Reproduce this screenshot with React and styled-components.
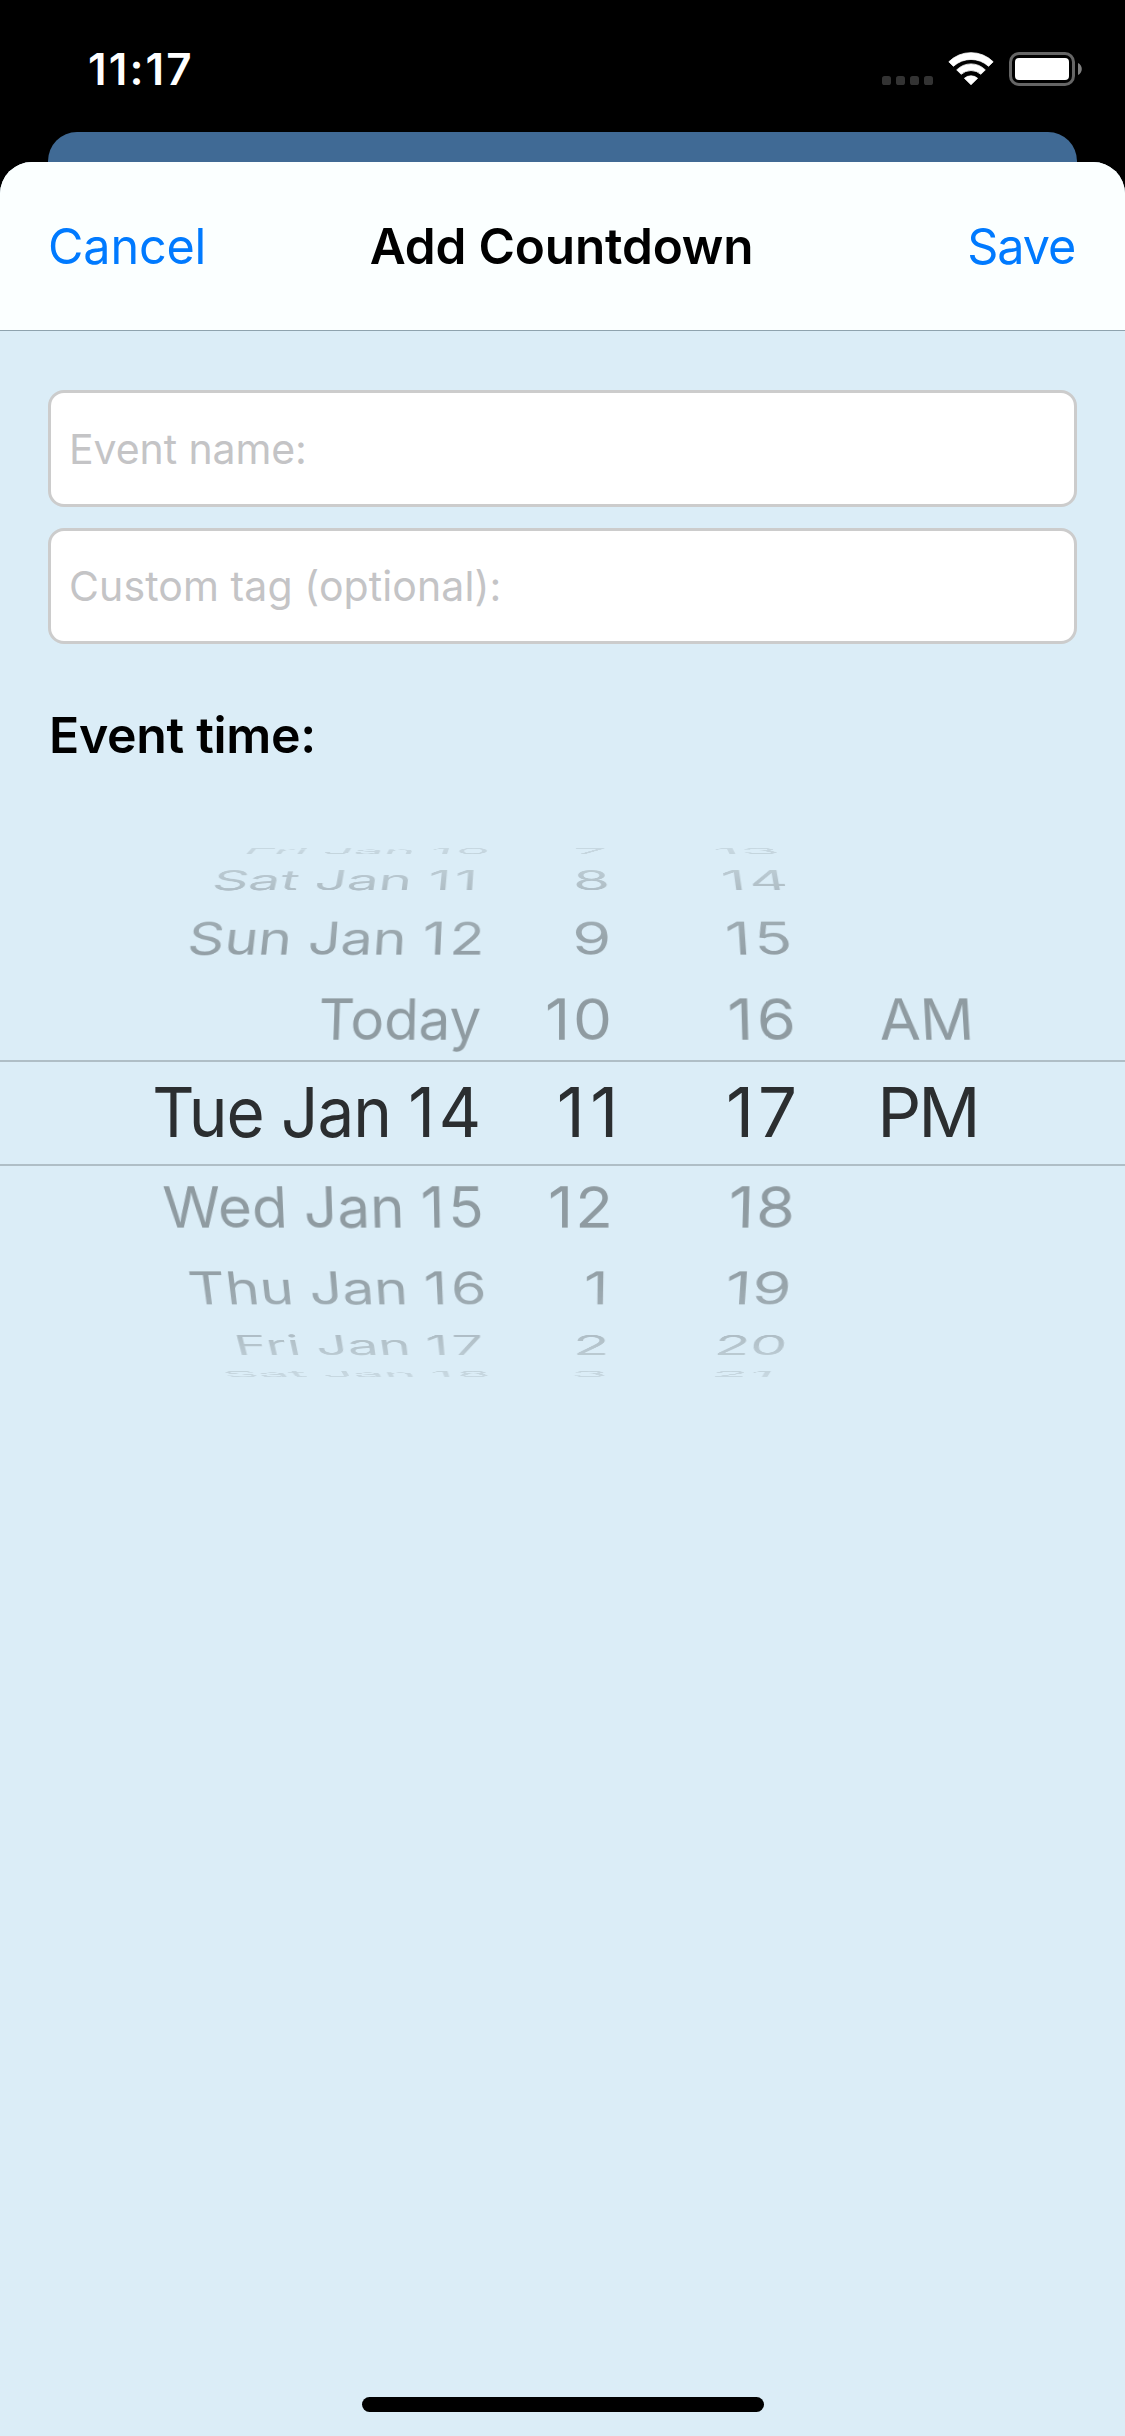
import React from "react";
import styled, { createGlobalStyle } from "styled-components";

const GlobalStyle = createGlobalStyle`
  *, *::before, *::after { box-sizing: border-box; }
  html, body { margin: 0; padding: 0; background: #000; }
  body { font-family: Inter, "Liberation Sans", sans-serif; }
`;

const Screen = styled.div`
  width: 1125px;
  height: 2436px;
  display: flex;
  flex-direction: column;
  background: #000;
  overflow: hidden;
`;

const StatusBar = styled.div`
  flex: none;
  height: 132px;
  padding: 52px 43px 0 88px;
  display: flex;
  justify-content: space-between;
  align-items: flex-start;
`;

const Clock = styled.time`
  color: #fff;
  font-size: 44px;
  font-weight: 600;
  line-height: 34px;
  letter-spacing: 2.1px;
`;

const Indicators = styled.div`
  display: flex;
  height: 34px;

  svg { display: block; }
  svg + svg { margin-left: 15px; }
`;

const CardBehind = styled.div`
  flex: none;
  height: 30px;
  margin: 0 48px;
  border-radius: 29px 29px 0 0;
  background: #406a95;
`;

const Sheet = styled.main`
  flex: 1;
  display: flex;
  flex-direction: column;
  border-radius: 32px 32px 0 0;
  background: #dbedf7;
  overflow: hidden;
`;

const Header = styled.header`
  flex: none;
  height: 169px;
  padding: 0 50px 0 48px;
  display: grid;
  grid-template-columns: 1fr auto 1fr;
  align-items: center;
  background: #fbffff;
  border-bottom: 1px solid #8fa3ae;
`;

const Title = styled.h1`
  margin: 0;
  font-size: 49.5px;
  font-weight: 600;
  line-height: 64px;
  letter-spacing: -0.16px;
  color: #000;
  white-space: nowrap;
`;

const BarButton = styled.button`
  justify-self: ${(p) => p.$side};
  padding: 0;
  border: 0;
  background: none;
  font-family: inherit;
  font-size: 49.5px;
  font-weight: 400;
  line-height: 64px;
  letter-spacing: ${(p) => p.$tracking}px;
  color: #007aff;
  transform: scaleX(0.98);
  transform-origin: ${(p) => (p.$side === "start" ? "left" : "right")};
`;

const Form = styled.section`
  flex: none;
  padding: 59px 48px 0;
  display: flex;
  flex-direction: column;
`;

const Field = styled.div`
  height: ${(p) => p.$height}px;
  padding-left: 18px;
  display: flex;
  align-items: center;
  border: 3px solid #ccc;
  border-radius: 16px;
  background: #fff;

  & + & { margin-top: 21px; }
`;

const Placeholder = styled.span`
  font-size: 41px;
  line-height: 54px;
  letter-spacing: ${(p) => p.$tracking}px;
  color: #c4c4c6;
  white-space: nowrap;
`;

const SectionLabel = styled.h2`
  margin: 61px 0 0 1px;
  font-size: 50px;
  font-weight: 600;
  line-height: 60px;
  letter-spacing: -0.32px;
  color: #000;
`;

const Wheel = styled.div`
  flex: none;
  margin-top: 74.6px;
  display: flex;
  flex-direction: column;
  clip-path: inset(8.4px 0 7.4px);
  mask-image: linear-gradient(
    to bottom,
    rgba(0, 0, 0, 0.25) 8px,
    rgba(0, 0, 0, 0.42) 30px,
    rgba(0, 0, 0, 0.58) 50px,
    rgba(0, 0, 0, 0.8) 82px,
    rgba(0, 0, 0, 0.95) 114px,
    #000 136px,
    #000 410px,
    rgba(0, 0, 0, 0.95) 431px,
    rgba(0, 0, 0, 0.8) 464px,
    rgba(0, 0, 0, 0.58) 495px,
    rgba(0, 0, 0, 0.42) 516px,
    rgba(0, 0, 0, 0.25) 537px
  );
`;

const WheelSlot = styled.div`
  flex: none;
  height: ${(p) => p.$height}px;
  display: flex;
  align-items: center;
  border-style: solid;
  border-color: #afbec6;
  border-width: ${(p) => (p.$selected ? "2px 0" : "0")};
`;

const WheelRow = styled.div`
  flex: none;
  width: 100%;
  height: 80px;
  display: grid;
  grid-template-columns: 484px 128px 184px 186px;
  align-items: center;
  justify-items: end;
  font-size: ${(p) => (p.$selected ? 69 : 60)}px;
  line-height: 80px;
  color: ${(p) => (p.$selected ? "#2b2e30" : "#8f9ba1")};
  transform: ${(p) =>
    p.$selected ? "translateY(-1px)" : `perspective(2400px) rotateX(${p.$tilt}deg)`};
`;

const WheelLabel = styled.span`
  display: block;
  white-space: pre;
  margin-right: ${(p) => p.$inset}px;
  letter-spacing: ${(p) => p.$tracking || 0}px;
  transform: scaleX(${(p) => p.$stretch});
  transform-origin: right;
`;

const DayNumber = styled.span`
  margin-right: -4px;
  letter-spacing: 4px;
`;

const HomeArea = styled.footer`
  flex: 1;
  display: flex;
  justify-content: center;
  align-items: flex-end;
  padding-bottom: 24px;
`;

const HomeIndicator = styled.div`
  width: 402px;
  height: 15px;
  border-radius: 7.5px;
  background: #000;
`;

// Each label: [text, horizontal stretch, letter spacing, inset from the column's right edge, day of month]
const rows = [
  { height: 23, tilt: 82, labels: [["Fri Jan ", 0.893, 0, -5.9, "10"], ["7", 1, 0, 4.8], ["13", 1.05, 1, 15.9]] },
  { height: 34.8, tilt: 62.7, labels: [["Sat Jan ", 0.939, 0, 6, "11"], ["8", 1, 0, 1.9], ["14", 1, 3, 5.5]] },
  { height: 80.6, tilt: 41.4, labels: [["Sun Jan ", 0.951, 0, -0.2, "12"], ["9", 1.05, 0, 0.3], ["15", 1.04, 3.3, 0.6]] },
  { height: 82, tilt: 20, labels: [["Today", 0.94, 0, 2.6], ["10", 1.03, 2.8, -2.6], ["16", 1.05, 3.3, -3.5], ["AM", 0.99, 0, 8]] },
  { height: 106, selected: true, labels: [["Tue Jan ", 0.95, -1.1, 2.7, "14"], ["11", 1, 5.5, -11.8], ["17", 1, 3.9, -4.9], ["PM", 1, -3, 4.4]] },
  { height: 82, tilt: -20, labels: [["Wed Jan ", 0.972, 0, 0.6, "15"], ["12", 1.03, 1.9, -2.7], ["18", 1.05, 1.7, -1]] },
  { height: 79.4, tilt: -41.4, labels: [["Thu Jan ", 0.953, 0, -2.4, "16"], ["1", 1, 0, 3.6], ["19", 1.05, 1, 3.3]] },
  { height: 36.2, tilt: -62.7, labels: [["Fri Jan ", 0.917, 0, 0.9, "17"], ["2", 1, 0, 2.3], ["20", 0.98, 0, 9]] },
  { height: 20.8, tilt: -82, labels: [["Sat Jan ", 0.908, 0, -6.1, "18"], ["3", 1, 0, 4], ["21", 1, 2, 19.5]] },
];

function SignalIcon() {
  return (
    <svg width="51" height="34" viewBox="0 0 51 34" fill="#333">
      {[0, 14, 28, 42].map((x) => (
        <rect key={x} x={x} y="24" width="9" height="9" rx="2.6" />
      ))}
    </svg>
  );
}

function WifiIcon() {
  return (
    <svg width="46" height="34" viewBox="0 0 46 34" fill="#fff" stroke="#fff" strokeWidth="0.8" strokeLinejoin="round">
      <path d="M0.8 9.8A31.5 31.5 0 0 1 45.2 9.8L40.6 14.3A26 26 0 0 0 5.4 14.3Z" />
      <path d="M8.7 17.9A20 20 0 0 1 37.3 17.9L32.8 22.3A14.6 14.6 0 0 0 13.2 22.3Z" />
      <path d="M16.4 26.3A10 10 0 0 1 29.6 26.3L23 32.7Z" />
    </svg>
  );
}

function BatteryIcon() {
  return (
    <svg width="73" height="34" viewBox="0 0 73 34">
      <rect x="1.5" y="1.5" width="63" height="31" rx="8.5" fill="none" stroke="#666" strokeWidth="3" />
      <rect x="6" y="6" width="54" height="22" rx="4" fill="#fff" />
      <path d="M69 11C71.4 12.2 72.8 14.4 72.8 17S71.4 21.8 69 23Z" fill="#808080" />
    </svg>
  );
}

export default function App() {
  return (
    <Screen>
      <GlobalStyle />
      <StatusBar>
        <Clock>11:17</Clock>
        <Indicators>
          <SignalIcon />
          <WifiIcon />
          <BatteryIcon />
        </Indicators>
      </StatusBar>
      <CardBehind />
      <Sheet>
        <Header>
          <BarButton $side="start" $tracking={-0.15}>Cancel</BarButton>
          <Title>Add Countdown</Title>
          <BarButton $side="end" $tracking={-1.1}>Save</BarButton>
        </Header>
        <Form>
          <Field $height={117}>
            <Placeholder $tracking={-0.09}>Event name:</Placeholder>
          </Field>
          <Field $height={116}>
            <Placeholder $tracking={0.1}>Custom tag (optional):</Placeholder>
          </Field>
          <SectionLabel>Event time:</SectionLabel>
        </Form>
        <Wheel>
          {rows.map((row) => (
            <WheelSlot key={row.height + ":" + row.tilt} $height={row.height} $selected={row.selected}>
              <WheelRow $selected={row.selected} $tilt={row.tilt}>
                {row.labels.map(([text, stretch, tracking, inset, day]) => (
                  <WheelLabel key={text} $stretch={stretch} $tracking={tracking} $inset={inset}>
                    {text}
                    {day && <DayNumber>{day}</DayNumber>}
                  </WheelLabel>
                ))}
              </WheelRow>
            </WheelSlot>
          ))}
        </Wheel>
        <HomeArea>
          <HomeIndicator />
        </HomeArea>
      </Sheet>
    </Screen>
  );
}
